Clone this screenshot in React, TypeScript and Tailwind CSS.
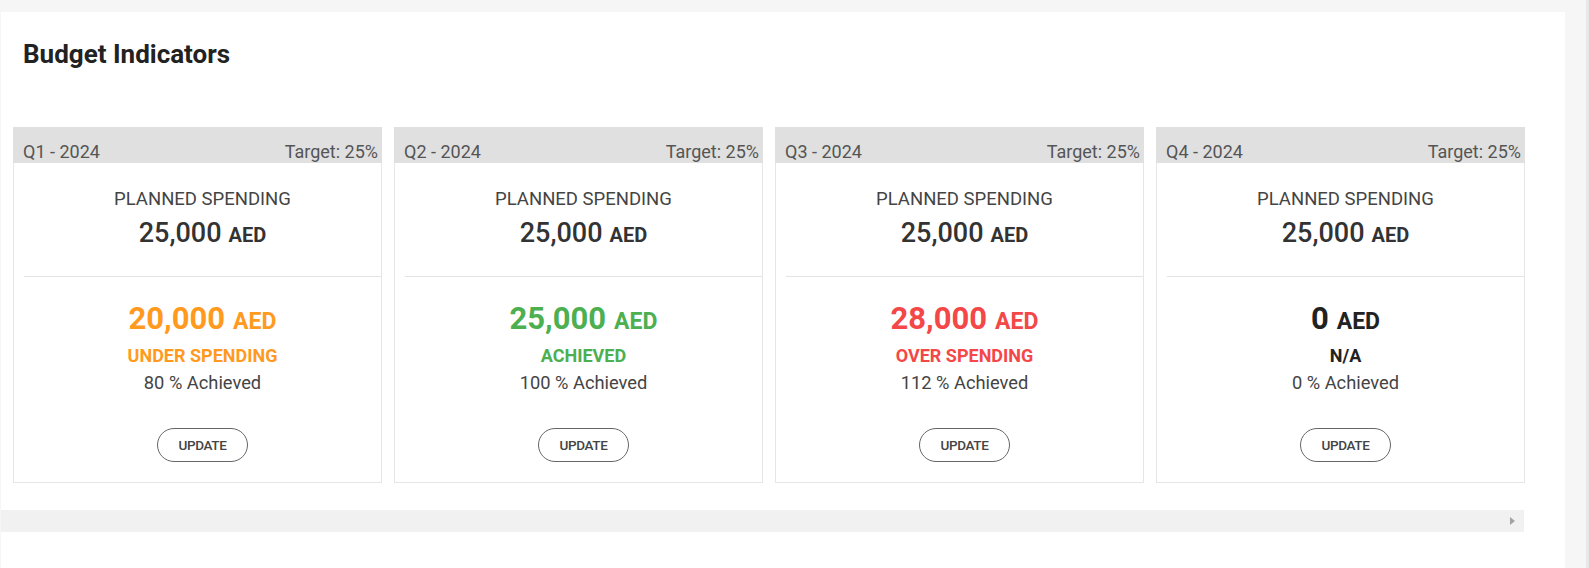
import React from 'react';

type Quarter = {
  label: string;
  planned: string;
  actual: string;
  status: string;
  achieved: string;
  tone: 'orange' | 'green' | 'red' | 'none';
};

const quarters: Quarter[] = [
  { label: 'Q1 - 2024', planned: '25,000', actual: '20,000', status: 'UNDER SPENDING', achieved: '80 % Achieved', tone: 'orange' },
  { label: 'Q2 - 2024', planned: '25,000', actual: '25,000', status: 'ACHIEVED', achieved: '100 % Achieved', tone: 'green' },
  { label: 'Q3 - 2024', planned: '25,000', actual: '28,000', status: 'OVER SPENDING', achieved: '112 % Achieved', tone: 'red' },
  { label: 'Q4 - 2024', planned: '25,000', actual: '0', status: 'N/A', achieved: '0 % Achieved', tone: 'none' },
];

const toneClass: Record<Quarter['tone'], string> = {
  orange: 'text-[#ff9a1f]',
  green: 'text-[#4caf50]',
  red: 'text-[#f44747]',
  none: 'text-[#222]',
};

const QuarterCard: React.FC<{ q: Quarter }> = ({ q }) => {
  return (
    <div className="w-[369px] shrink-0">
      <div className="h-[36px] bg-[#e0e0e0] flex items-start justify-between pt-[15px] pl-[10px] pr-[4px] text-[18px] leading-[20px] text-[#555]">
        <span>{q.label}</span>
        <span>Target: 25%</span>
      </div>
      <div className="border border-t-0 border-[#e6e6e6] bg-white flex flex-col items-center pl-[10px] pt-[26px] pb-[20px]">
        <p className="text-[18.5px] leading-[20px] text-[#444]">PLANNED SPENDING</p>
        <p className="mt-[9px] leading-[30px] text-[#333] flex items-baseline gap-[7px]">
          <span className="text-[27px] font-medium">{q.planned}</span>
          <span className="text-[20px] font-bold">AED</span>
        </p>
        <div className="mt-[26px] self-stretch h-px bg-[#e4e4e4]" />
        <p className={`mt-[25px] leading-[34px] flex items-baseline gap-[8px] ${toneClass[q.tone]}`}>
          <span className="text-[31px] font-bold">{q.actual}</span>
          <span className="text-[23px] font-bold">AED</span>
        </p>
        <p className={`mt-[7px] text-[18px] leading-[20px] font-bold ${toneClass[q.tone]}`}>{q.status}</p>
        <p className="mt-[7px] text-[18.3px] leading-[20px] text-[#444]">{q.achieved}</p>
        <button className="mt-[35px] w-[91px] h-[34px] rounded-full border-[1.5px] border-[#666] text-[13.5px] font-medium text-[#444] tracking-tight">
          UPDATE
        </button>
      </div>
    </div>
  );
};

export default function App() {
  return (
    <div className="w-[1589px] h-[568px] bg-[#f6f6f6] flex overflow-hidden" style={{ fontFamily: 'Roboto, "Noto Sans", sans-serif' }}>
      <div className="ml-[1px] mt-[12px] w-[1564px] bg-white flex flex-col">
        <h2 className="pl-[22px] pt-[27px] text-[26px] leading-[30px] font-bold text-[#222]">Budget Indicators</h2>
        <div className="w-[1523px] mt-[58px]">
          <div className="flex gap-[12px] pl-[12px]">
            {quarters.map((q) => (
              <QuarterCard key={q.label} q={q} />
            ))}
          </div>
          <div className="mt-[27px] h-[22px] bg-[#f1f1f1] flex items-center justify-end pr-[9px]">
            <svg width="5" height="8" viewBox="0 0 5 8">
              <path d="M0 0 L5 4 L0 8 Z" fill="#a3a3a3" />
            </svg>
          </div>
        </div>
      </div>
      <div className="ml-auto w-[3px] h-full bg-[#e8e8e8]" />
    </div>
  );
}
